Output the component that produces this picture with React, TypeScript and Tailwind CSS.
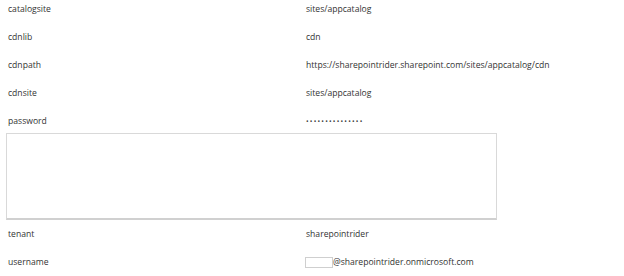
const rows = [
  { label: "catalogsite", value: "sites/appcatalog" },
  { label: "cdnlib", value: "cdn" },
  { label: "cdnpath", value: "https://sharepointrider.sharepoint.com/sites/appcatalog/cdn" },
  { label: "cdnsite", value: "sites/appcatalog" },
  { label: "password", value: "•••••••••••••••" },
];

const App = () => {
  return (
    <div className="w-[624px] h-[276px] bg-white text-[#333] text-[8.6px] leading-[13px] font-['Open_Sans',sans-serif] pt-[3px] overflow-hidden">
      <div className="flex flex-col gap-[15px]">
        {rows.map((r) => (
          <div key={r.label} className="flex">
            <span className="w-[306px] pl-[8px]">{r.label}</span>
            <span className={r.label === "password" ? "text-[7px] tracking-[1.2px] text-[#444]" : ""}>{r.value}</span>
          </div>
        ))}
      </div>
      <div className="ml-[6px] mt-[5px] w-[491px] h-[87px] border border-[#d9d9d9] border-b-2 border-b-[#d0d0d0]" />
      <div className="flex mt-[8px]">
        <span className="w-[306px] pl-[8px]">tenant</span>
        <span>sharepointrider</span>
      </div>
      <div className="flex mt-[15px] items-center">
        <span className="w-[305px] pl-[8px]">username</span>
        <span className="w-[28px] h-[11px] border border-[#cfcfcf] bg-white" />
        <span>@sharepointrider.onmicrosoft.com</span>
      </div>
    </div>
  );
};

export default App;
